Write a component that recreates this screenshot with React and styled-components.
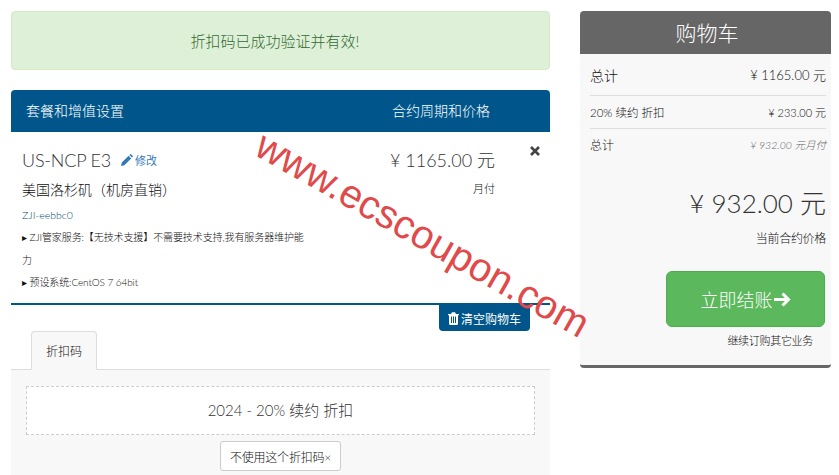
import React from 'react'
import styled, { createGlobalStyle } from 'styled-components';

const Colors = {
    Primary: '#00568b',
    Text: '#333333',
    SmallText: '#111111',
    Panel: '#f8f8f8',
    Line: '#dddddd',
    Header: '#666666',
    Green: '#5cb85c',
};

const GlobalStyle = createGlobalStyle`
    html, body {
        margin: 0;
        padding: 0;
        background: #ffffff;
        overflow: hidden;
    }
    body {
        font-family: Lato, "Noto Sans CJK SC", sans-serif;
        font-size: 14px;
        color: ${Colors.Text};
    }
    * {
        box-sizing: border-box;
    }
`;

const Page = styled.div`
    position: relative;
    width: 839px;
    height: 475px;
    overflow: hidden;
    display: flex;
    align-items: flex-start;
    gap: 30px;
    padding: 11px 8px 0 11px;
`;

const MainColumn = styled.div`
    width: 539px;
    flex-shrink: 0;
`;

const SuccessAlert = styled.div`
    height: 59px;
    margin-bottom: 20px;
    padding-right: 11px;
    display: flex;
    align-items: center;
    justify-content: center;
    background-color: #dff0d8;
    border: 1px solid #d6e9c6;
    border-radius: 4px;
    color: #2f6b30;
    font-size: 15px;
    font-weight: 300;
`;

const TableHeader = styled.div`
    height: 42px;
    display: flex;
    align-items: center;
    justify-content: space-between;
    padding: 0 60px 2px 15px;
    background-color: ${Colors.Primary};
    border-radius: 4px 4px 0 0;
    color: #ffffff;
    font-size: 14px;
    font-weight: 300;
`;

const ProductRow = styled.div`
    position: relative;
    height: 173px;
    display: flex;
    justify-content: space-between;
    padding: 15px 55px 0 11px;
    border-bottom: 2px solid ${Colors.Primary};
`;

const ProductInfo = styled.div`
    width: 288px;
`;

const ProductTitle = styled.div`
    display: flex;
    align-items: center;
    height: 26px;
    gap: 10px;
    font-size: 18px;
    font-weight: 300;
    letter-spacing: -0.2px;
`;

const EditLink = styled.span`
    display: inline-flex;
    align-items: center;
    gap: 2px;
    font-size: 11px;
    font-weight: 400;
    letter-spacing: 0;
    color: #337ab7;
`;

const ProductGroup = styled.div`
    margin-top: 5px;
    height: 24px;
    line-height: 24px;
    font-size: 14px;
    font-weight: 300;
    color: ${Colors.SmallText};
`;

const ProductDomain = styled.div`
    margin-top: 2px;
    height: 22px;
    line-height: 22px;
    font-size: 10.5px;
    font-weight: 300;
    color: #004a70;
`;

const ProductDetail = styled.div`
    font-size: 10px;
    line-height: 22.5px;
    font-weight: 300;
    letter-spacing: -0.1px;
    color: ${Colors.SmallText};
`;

const PriceBlock = styled.div`
    text-align: right;
`;

const PriceAmount = styled.div`
    height: 26px;
    line-height: 26px;
    font-size: 18px;
    font-weight: 300;
`;

const PriceCycle = styled.div`
    margin-top: 7px;
    font-size: 11px;
    font-weight: 300;
    color: ${Colors.SmallText};
`;

const RemoveButton = styled.div`
    position: absolute;
    top: 14px;
    right: 10px;
    color: #444444;
    line-height: 0;
`;

const ClearRow = styled.div`
    display: flex;
    justify-content: flex-end;
    padding-right: 20px;
`;

const ClearButton = styled.div`
    height: 26px;
    width: 91px;
    display: flex;
    align-items: center;
    justify-content: center;
    gap: 2px;
    background-color: ${Colors.Primary};
    border-radius: 0 0 4px 4px;
    color: #ffffff;
    font-size: 12px;
`;

const Tabs = styled.div`
    height: 39px;
    display: flex;
    align-items: flex-end;
    padding-left: 20px;
    border-bottom: 1px solid ${Colors.Line};
`;

const Tab = styled.div`
    width: 66px;
    height: 39px;
    margin-bottom: -1px;
    display: flex;
    align-items: center;
    justify-content: center;
    background-color: ${Colors.Panel};
    border: 1px solid ${Colors.Line};
    border-bottom-color: ${Colors.Panel};
    border-radius: 4px 4px 0 0;
    font-size: 12px;
    font-weight: 300;
    color: ${Colors.SmallText};
`;

const TabPane = styled.div`
    height: 110px;
    padding: 16px 15px 0;
    background-color: ${Colors.Panel};
    display: flex;
    flex-direction: column;
    align-items: center;
`;

const PromoBox = styled.div`
    width: 100%;
    height: 49px;
    padding-bottom: 2px;
    display: flex;
    align-items: center;
    justify-content: center;
    background-color: #ffffff;
    border: 1px dashed #cccccc;
    font-size: 15px;
    font-weight: 300;
`;

const PromoRemove = styled.div`
    margin-top: 6px;
    width: 121px;
    height: 30px;
    display: flex;
    align-items: center;
    justify-content: center;
    background-color: #ffffff;
    border: 1px solid #cccccc;
    border-radius: 3px;
    font-size: 12px;
    font-weight: 300;
    letter-spacing: -0.2px;
    color: ${Colors.SmallText};
`;

const Cart = styled.aside`
    width: 251px;
    height: 357px;
    flex-shrink: 0;
    background-color: ${Colors.Panel};
    border-bottom: 3px solid ${Colors.Header};
    border-radius: 4px;
`;

const CartHeader = styled.div`
    height: 43px;
    padding: 0 0 2px 3px;
    display: flex;
    align-items: center;
    justify-content: center;
    background-color: ${Colors.Header};
    border-radius: 4px 4px 0 0;
    color: #ffffff;
    font-size: 21px;
    font-weight: 300;
`;

const CartBody = styled.div`
    padding: 0 5px 0 10px;
`;

const SummaryRow = styled.div`
    height: ${props => props.$height}px;
    display: flex;
    align-items: center;
    justify-content: space-between;
    border-bottom: ${props => props.$last ? 'none' : `1px solid ${Colors.Line}`};
    font-size: ${props => props.$size}px;
    font-weight: 300;
    color: ${Colors.SmallText};
`;

const RowLabel = styled.span`
    font-size: ${props => props.$size}px;
`;

const CycleNote = styled.span`
    color: #666666;
    font-style: italic;
    font-size: 10.5px;
`;

const Total = styled.div`
    margin-top: 24px;
    text-align: right;
    height: 40px;
    line-height: 40px;
    font-size: 26px;
    font-weight: 300;
`;

const TotalLabel = styled.div`
    margin-top: 6px;
    text-align: right;
    font-size: 12px;
    font-weight: 300;
    letter-spacing: -0.3px;
    color: ${Colors.SmallText};
`;

const CheckoutButton = styled.div`
    margin: 25px 1px 0 auto;
    width: 159px;
    height: 56px;
    display: flex;
    align-items: center;
    justify-content: center;
    gap: 1px;
    background-color: ${Colors.Green};
    border: 1px solid #4cae4c;
    border-radius: 6px;
    color: #ffffff;
    font-size: 18px;
    font-weight: 300;
`;

const ContinueLink = styled.div`
    margin-top: 5px;
    padding-right: 13px;
    text-align: right;
    font-size: 11px;
    font-weight: 300;
    letter-spacing: -0.3px;
    color: ${Colors.SmallText};
`;

const Watermark = styled.div`
    position: absolute;
    left: 235px;
    top: 214px;
    color: #e04a4a;
    font-family: "Liberation Sans", sans-serif;
    font-size: 40px;
    line-height: 1;
    white-space: nowrap;
    transform: rotate(29.5deg);
`;

const PencilIcon = () => (
    <svg width="12" height="12" viewBox="0 0 12 12">
        <path fill="#337ab7" d="M0 12 L0.8 8.6 L7.6 1.8 L10.2 4.4 L3.4 11.2 Z M8.4 1 L9.2 0.2 Q9.6 -0.1 10 0.2 L11.8 2 Q12.1 2.4 11.8 2.8 L11 3.6 Z" />
    </svg>
);

const CloseIcon = () => (
    <svg width="10" height="10" viewBox="0 0 10 10">
        <path stroke="#444444" strokeWidth="2.6" d="M1 1 L9 9 M9 1 L1 9" />
    </svg>
);

const TrashIcon = () => (
    <svg width="11" height="13" viewBox="0 0 11 13">
        <path fill="#ffffff" fillRule="evenodd" d="M0 2 H3 L4 0.3 H7 L8 2 H11 V3.2 H10 V11.5 Q10 13 8.8 13 H2.2 Q1 13 1 11.5 V3.2 H0 Z M3 4.5 V11 H4 V4.5 Z M5 4.5 V11 H6 V4.5 Z M7 4.5 V11 H8 V4.5 Z" />
    </svg>
);

const ArrowIcon = () => (
    <svg width="17" height="15" viewBox="0 0 17 15">
        <path fill="none" stroke="#ffffff" strokeWidth="3" d="M0 7.5 H14 M8.5 1.5 L14.5 7.5 L8.5 13.5" />
    </svg>
);

const App = () => {
    return (
        <Page>
            <GlobalStyle />
            <MainColumn>
                <SuccessAlert>折扣码已成功验证并有效!</SuccessAlert>
                <TableHeader>
                    <span>套餐和增值设置</span>
                    <span>合约周期和价格</span>
                </TableHeader>
                <ProductRow>
                    <ProductInfo>
                        <ProductTitle>
                            US-NCP E3
                            <EditLink><PencilIcon />修改</EditLink>
                        </ProductTitle>
                        <ProductGroup>美国洛杉矶（机房直销）</ProductGroup>
                        <ProductDomain>ZJI-eebbc0</ProductDomain>
                        <ProductDetail>▸ ZJI管家服务:【无技术支援】不需要技术支持,我有服务器维护能力</ProductDetail>
                        <ProductDetail>▸ 预设系统:CentOS 7 64bit</ProductDetail>
                    </ProductInfo>
                    <PriceBlock>
                        <PriceAmount>¥ 1165.00 元</PriceAmount>
                        <PriceCycle>月付</PriceCycle>
                    </PriceBlock>
                    <RemoveButton><CloseIcon /></RemoveButton>
                </ProductRow>
                <ClearRow>
                    <ClearButton><TrashIcon />清空购物车</ClearButton>
                </ClearRow>
                <Tabs>
                    <Tab>折扣码</Tab>
                </Tabs>
                <TabPane>
                    <PromoBox>2024 - 20% 续约 折扣</PromoBox>
                    <PromoRemove>不使用这个折扣码×</PromoRemove>
                </TabPane>
            </MainColumn>
            <Cart>
                <CartHeader>购物车</CartHeader>
                <CartBody>
                    <SummaryRow $height={42} $size={13}>
                        <RowLabel $size={14}>总计</RowLabel>
                        <span>¥ 1165.00 元</span>
                    </SummaryRow>
                    <SummaryRow $height={33} $size={11.5}>
                        <span>20% 续约 折扣</span>
                        <RowLabel $size={11}>¥ 233.00 元</RowLabel>
                    </SummaryRow>
                    <SummaryRow $height={30} $size={12} $last>
                        <span>总计</span>
                        <CycleNote>¥ 932.00 元月付</CycleNote>
                    </SummaryRow>
                    <Total>¥ 932.00 元</Total>
                    <TotalLabel>当前合约价格</TotalLabel>
                    <CheckoutButton>立即结账<ArrowIcon /></CheckoutButton>
                    <ContinueLink>继续订购其它业务</ContinueLink>
                </CartBody>
            </Cart>
            <Watermark>www.ecscoupon.com</Watermark>
        </Page>
    )
}

export default App;
